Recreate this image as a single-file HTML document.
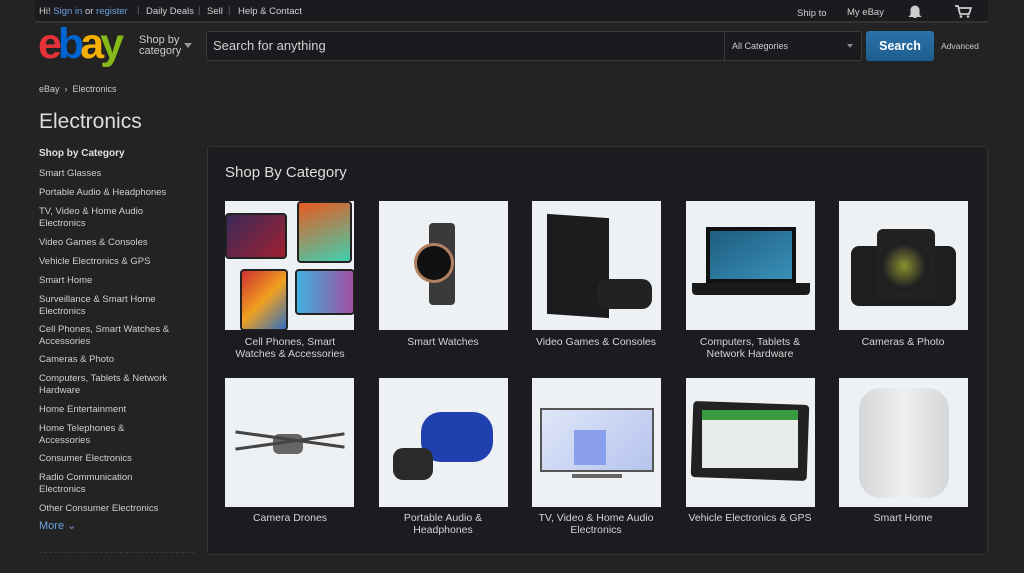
<!DOCTYPE html>
<html><head><style>
*{margin:0;padding:0;box-sizing:border-box}
body{width:1024px;height:573px;background:#232323;font-family:"Liberation Sans",sans-serif;color:#d8d8d8;position:relative;overflow:hidden}
.a{position:absolute}
.top{left:35px;top:0;width:953px;height:23px;background:#1b1b1f;border-bottom:2px solid #333}
.t{font-size:9.5px;color:#d0d0d0;white-space:nowrap}
.side div{font-size:9.5px;color:#cfcfcf;line-height:11.5px;position:absolute;left:39px}
.panel{left:207px;top:146px;width:781px;height:409px;background:#1c1c20;border:1px solid #333;border-radius:3px}
.tile{width:129px;height:129px;background:#eef1f4;overflow:hidden}
.lbl{font-size:10.5px;color:#d4d4d4;text-align:center;width:150px;line-height:12px}
</style></head><body>
<div class="a top"></div>
<div class="a t" style="left:39px;top:6px">Hi! <span style="color:#6aa1dc">Sign in</span> or <span style="color:#6aa1dc">register</span></div>
<div class="a t" style="left:137px;top:5px;color:#666">|</div>
<div class="a t" style="left:146px;top:6px">Daily Deals</div>
<div class="a t" style="left:198px;top:5px;color:#666">|</div>
<div class="a t" style="left:207px;top:6px">Sell</div>
<div class="a t" style="left:228px;top:5px;color:#666">|</div>
<div class="a t" style="left:238px;top:6px">Help &amp; Contact</div>
<div class="a t" style="left:797px;top:8px">Ship to</div>
<div class="a t" style="left:847px;top:7px">My eBay</div>
<svg class="a" style="left:907px;top:4px" width="16" height="15"><path d="M4 11V6a4 4 0 0 1 8 0v5l1.5 1.5h-11z M6.5 13.5h3" fill="#ccc" stroke="#ccc"/></svg>
<svg class="a" style="left:954px;top:4px" width="18" height="15"><path d="M1 2h3l2 8h9l2-6H5" fill="none" stroke="#ccc" stroke-width="1.8"/><circle cx="7" cy="12.5" r="1.3" fill="#ccc"/><circle cx="14" cy="12.5" r="1.3" fill="#ccc"/></svg>
<div class="a" style="left:38px;top:24px;font-size:43px;font-weight:bold;letter-spacing:-4px;line-height:40px;font-family:'Liberation Sans',sans-serif"><span style="color:#e53238">e</span><span style="color:#0064d2">b</span><span style="color:#f5af02">a</span><span style="color:#86b817">y</span></div>
<div class="a" style="left:139px;top:35px;font-size:11px;line-height:11px;color:#ccc">Shop by<br>category</div>
<div class="a" style="left:184px;top:43px;border:4px solid transparent;border-top:5px solid #999"></div>
<div class="a" style="left:206px;top:31px;width:656px;height:30px;background:#1b1b1f;border:1px solid #3a3a3a;border-radius:2px"></div>
<div class="a" style="left:724px;top:31px;width:1px;height:30px;background:#3a3a3a"></div>
<div class="a" style="left:213px;top:38px;font-size:13px;color:#d0d0d0">Search for anything</div>
<div class="a" style="left:732px;top:41px;font-size:9px;color:#ccc">All Categories</div>
<div class="a" style="left:847px;top:44px;border:3px solid transparent;border-top:4px solid #888"></div>
<div class="a" style="left:866px;top:31px;width:68px;height:30px;background:linear-gradient(#2b72a8,#1e5d8f);border-radius:3px;color:#fff;font-size:12.5px;font-weight:bold;text-align:center;line-height:30px">Search</div>
<div class="a" style="left:941px;top:41px;font-size:8.5px;color:#ccc">Advanced</div>
<div class="a" style="left:39px;top:84px;font-size:9px;color:#ccc">eBay &nbsp;›&nbsp; Electronics</div>
<div class="a" style="left:39px;top:110px;font-size:21px;color:#ddd">Electronics</div>
<div class="side">
<div style="top:148px;font-weight:bold;font-size:10px;color:#e0e0e0">Shop by Category</div>
<div style="top:168px">Smart Glasses</div>
<div style="top:187px">Portable Audio &amp; Headphones</div>
<div style="top:206px">TV, Video &amp; Home Audio<br>Electronics</div>
<div style="top:237px">Video Games &amp; Consoles</div>
<div style="top:256px">Vehicle Electronics &amp; GPS</div>
<div style="top:275px">Smart Home</div>
<div style="top:294px">Surveillance &amp; Smart Home<br>Electronics</div>
<div style="top:324px">Cell Phones, Smart Watches &amp;<br>Accessories</div>
<div style="top:354px">Cameras &amp; Photo</div>
<div style="top:373px">Computers, Tablets &amp; Network<br>Hardware</div>
<div style="top:404px">Home Entertainment</div>
<div style="top:423px">Home Telephones &amp;<br>Accessories</div>
<div style="top:453px">Consumer Electronics</div>
<div style="top:472px">Radio Communication<br>Electronics</div>
<div style="top:503px">Other Consumer Electronics</div>
<div style="top:521px;color:#6aa1dc;font-size:11px">More ⌄</div>
</div>
<div class="a" style="left:39px;top:552px;width:155px;border-top:1px dashed #3a3a3a"></div>
<div class="a panel"></div>
<div class="a" style="left:225px;top:164px;font-size:15px;color:#ddd">Shop By Category</div>

<div class="a tile" style="left:225px;top:201px">
 <div class="a" style="left:0;top:12px;width:62px;height:46px;background:linear-gradient(135deg,#3a2a5a,#a02030);border-radius:4px;border:2px solid #222"></div>
 <div class="a" style="left:72px;top:0;width:55px;height:62px;background:linear-gradient(160deg,#e85a20,#40d0b0);border-radius:4px;border:2px solid #222"></div>
 <div class="a" style="left:15px;top:68px;width:48px;height:62px;background:linear-gradient(135deg,#d03030,#f0a020,#3070c0);border-radius:4px;border:2px solid #222"></div>
 <div class="a" style="left:70px;top:68px;width:60px;height:46px;background:linear-gradient(90deg,#40b0e0,#a050a0);border-radius:4px;border:2px solid #222"></div>
</div>
<div class="a tile" style="left:379px;top:201px">
 <div class="a" style="left:50px;top:22px;width:26px;height:82px;background:#3a3a3a;border-radius:4px"></div>
 <div class="a" style="left:35px;top:42px;width:40px;height:40px;background:#111;border-radius:50%;border:3px solid #b08060"></div>
</div>
<div class="a tile" style="left:532px;top:201px">
 <div class="a" style="left:15px;top:15px;width:62px;height:100px;background:#1c1c1e;transform:skewY(4deg)"></div>
 <div class="a" style="left:65px;top:78px;width:55px;height:30px;background:#222;border-radius:10px"></div>
</div>
<div class="a tile" style="left:686px;top:201px">
 <div class="a" style="left:20px;top:26px;width:90px;height:56px;background:linear-gradient(150deg,#1e5d80,#3a90b8);border:4px solid #111"></div>
 <div class="a" style="left:6px;top:82px;width:118px;height:12px;background:#1a1a1a;border-radius:0 0 4px 4px"></div>
</div>
<div class="a tile" style="left:839px;top:201px">
 <div class="a" style="left:12px;top:45px;width:105px;height:60px;background:#1e1e1e;border-radius:8px"></div>
 <div class="a" style="left:38px;top:28px;width:58px;height:70px;background:#222;border-radius:6px"></div>
 <div class="a" style="left:40px;top:40px;width:50px;height:50px;background:radial-gradient(#8a9030,#222 60%,#111);border-radius:50%"></div>
</div>
<div class="a lbl" style="left:215px;top:336px">Cell Phones, Smart<br>Watches &amp; Accessories</div>
<div class="a lbl" style="left:368px;top:336px">Smart Watches</div>
<div class="a lbl" style="left:521px;top:336px">Video Games &amp; Consoles</div>
<div class="a lbl" style="left:675px;top:336px">Computers, Tablets &amp;<br>Network Hardware</div>
<div class="a lbl" style="left:828px;top:336px">Cameras &amp; Photo</div>

<div class="a tile" style="left:225px;top:378px">
 <div class="a" style="left:48px;top:56px;width:30px;height:20px;background:#666;border-radius:6px"></div>
 <div class="a" style="left:10px;top:60px;width:110px;height:3px;background:#444;transform:rotate(8deg)"></div>
 <div class="a" style="left:10px;top:62px;width:110px;height:3px;background:#444;transform:rotate(-8deg)"></div>
</div>
<div class="a tile" style="left:379px;top:378px">
 <div class="a" style="left:42px;top:34px;width:72px;height:50px;background:#2040b0;border-radius:20px"></div>
 <div class="a" style="left:14px;top:70px;width:40px;height:32px;background:#2a2a2a;border-radius:10px"></div>
</div>
<div class="a tile" style="left:532px;top:378px">
 <div class="a" style="left:8px;top:30px;width:114px;height:64px;background:linear-gradient(135deg,#dfe6f8,#b6c4ee);border:2px solid #555"></div>
 <div class="a" style="left:42px;top:52px;width:32px;height:35px;background:#8aa0ee"></div>
 <div class="a" style="left:40px;top:96px;width:50px;height:4px;background:#666"></div>
</div>
<div class="a tile" style="left:686px;top:378px">
 <div class="a" style="left:6px;top:25px;width:116px;height:76px;background:#222;border-radius:4px;transform:rotate(2deg)"></div>
 <div class="a" style="left:16px;top:32px;width:96px;height:58px;background:#e8ece8"></div>
 <div class="a" style="left:16px;top:32px;width:96px;height:10px;background:#3a9a40"></div>
</div>
<div class="a tile" style="left:839px;top:378px">
 <div class="a" style="left:20px;top:10px;width:90px;height:110px;background:linear-gradient(90deg,#d4d6d8,#eef0f2,#d4d6d8);border-radius:22px"></div>
</div>
<div class="a lbl" style="left:215px;top:512px">Camera Drones</div>
<div class="a lbl" style="left:368px;top:512px">Portable Audio &amp;<br>Headphones</div>
<div class="a lbl" style="left:521px;top:512px">TV, Video &amp; Home Audio<br>Electronics</div>
<div class="a lbl" style="left:675px;top:512px">Vehicle Electronics &amp; GPS</div>
<div class="a lbl" style="left:828px;top:512px">Smart Home</div>
</body></html>
